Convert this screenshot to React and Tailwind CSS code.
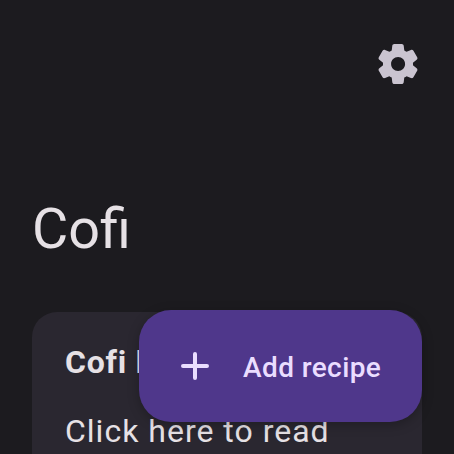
export default function App() {
  return (
    <div className="relative flex h-[454px] w-[454px] flex-col overflow-hidden bg-[#1c1b1f] font-['Roboto',sans-serif] text-[#e6e1e5]">
      <header className="flex h-32 shrink-0 items-center justify-end pr-8">
        <button aria-label="Settings" className="text-[#cac4d0]">
          <svg viewBox="0 0 24 24" className="size-12" fill="currentColor">
            <path d="M19.5 12c0-.23-.01-.45-.03-.68l1.86-1.41c.4-.3.51-.86.26-1.3l-1.87-3.23c-.25-.44-.79-.62-1.25-.42l-2.15.91c-.37-.26-.76-.49-1.17-.68l-.29-2.31C14.8 2.38 14.37 2 13.87 2h-3.73c-.51 0-.94.38-1 .88l-.29 2.31c-.41.19-.8.42-1.17.68l-2.15-.91c-.46-.2-1-.02-1.25.42L2.41 8.62c-.25.44-.14.99.26 1.3l1.86 1.41c-.02.22-.03.44-.03.67s.01.45.03.68l-1.86 1.41c-.4.3-.51.86-.26 1.3l1.87 3.23c.25.44.79.62 1.25.42l2.15-.91c.37.26.76.49 1.17.68l.29 2.31c.06.5.49.88.99.88h3.73c.5 0 .93-.38.99-.88l.29-2.31c.41-.19.8-.42 1.17-.68l2.15.91c.46.2 1 .02 1.25-.42l1.87-3.23c.25-.44.14-.99-.26-1.3l-1.86-1.41c.03-.23.04-.45.04-.68zm-7.46 3.5c-1.93 0-3.5-1.57-3.5-3.5s1.57-3.5 3.5-3.5 3.5 1.57 3.5 3.5-1.57 3.5-3.5 3.5z" />
          </svg>
        </button>
      </header>
      <h1 className="mt-[69px] shrink-0 pl-8 text-[56px] leading-[64px]"><span className="inline-block origin-left scale-x-[0.995]">Cofi</span></h1>
      <section className="mx-8 mt-[51px] h-[180px] shrink-0 rounded-[25px] bg-[#2a2730] px-[33px] pt-[30px]">
        <h2 className="text-[32px] leading-10 font-bold tracking-[0.8px] whitespace-nowrap">Cofi b</h2>
        <p className="mt-[27px] text-[32px] leading-[44px] tracking-[1px] whitespace-nowrap">Click here to read</p>
      </section>
      <button className="absolute top-[310px] left-[139px] flex h-28 w-[283px] items-center rounded-[32px] bg-[#4f378b] pl-8 text-[#eaddff] shadow-[0_3px_12px_rgba(0,0,0,0.25)]">
        <svg viewBox="0 0 24 24" className="size-12" fill="none" stroke="currentColor" strokeWidth="2" strokeLinecap="round">
          <path d="M12 6v12M6 12h12" />
        </svg>
        <span className="mt-[3px] ml-6 text-[28px] leading-10 font-medium tracking-[0.4px] whitespace-nowrap">Add recipe</span>
      </button>
    </div>
  );
}
